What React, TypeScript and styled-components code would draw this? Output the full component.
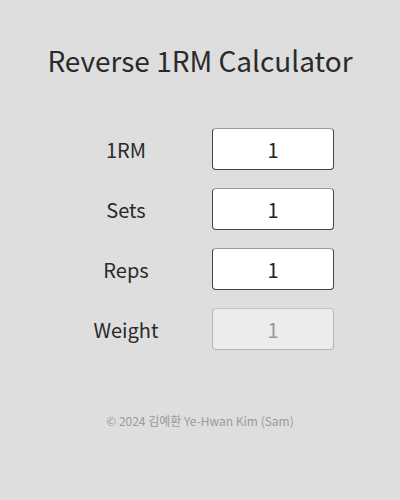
import React from "react";
import styled, { createGlobalStyle } from "styled-components";

const Global = createGlobalStyle`
  html, body { margin: 0; padding: 0; background: #dedede; }
  body { font-family: "Noto Sans CJK KR", "Noto Sans", sans-serif; color: #2a2a2a; }
`;

const Page = styled.div`
  width: 400px;
  height: 500px;
  display: flex;
  flex-direction: column;
  align-items: center;
`;

const Title = styled.h1`
  margin: 40px 0 0;
  font-size: 28px;
  font-weight: 400;
  line-height: 40px;
  color: #2a2a2a;
`;

const Form = styled.div`
  margin-top: 48px;
  width: 300px;
  display: grid;
  grid-template-columns: 152px 122px;
  column-gap: 10px;
  row-gap: 18px;
  align-items: center;
`;

const Label = styled.label`
  text-align: center;
  font-size: 20px;
  color: #2a2a2a;
`;

const Input = styled.input<{ $disabled?: boolean }>`
  box-sizing: border-box;
  width: 122px;
  height: 42px;
  border-radius: 4px;
  border: 1px solid ${(p) => (p.$disabled ? "#b4b4b4" : "#444")};
  border-top-color: ${(p) => (p.$disabled ? "#c4c4c4" : "#9a9a9a")};
  background: ${(p) => (p.$disabled ? "#ececec" : "#fff")};
  color: ${(p) => (p.$disabled ? "#999" : "#222")};
  font-family: inherit;
  font-size: 20px;
  text-align: center;
  padding: 0;
  outline: none;
`;

const Footer = styled.div`
  margin-top: 62px;
  font-size: 12px;
  color: #9a9a9a;
`;

const rows = ["1RM", "Sets", "Reps"];

export default function App() {
  return (
    <Page>
      <Global />
      <Title>Reverse 1RM Calculator</Title>
      <Form>
        {rows.map((r) => (
          <React.Fragment key={r}>
            <Label>{r}</Label>
            <Input defaultValue="1" />
          </React.Fragment>
        ))}
        <Label>Weight</Label>
        <Input $disabled disabled value="1" readOnly />
      </Form>
      <Footer>© 2024 김예환 Ye-Hwan Kim (Sam)</Footer>
    </Page>
  );
}
